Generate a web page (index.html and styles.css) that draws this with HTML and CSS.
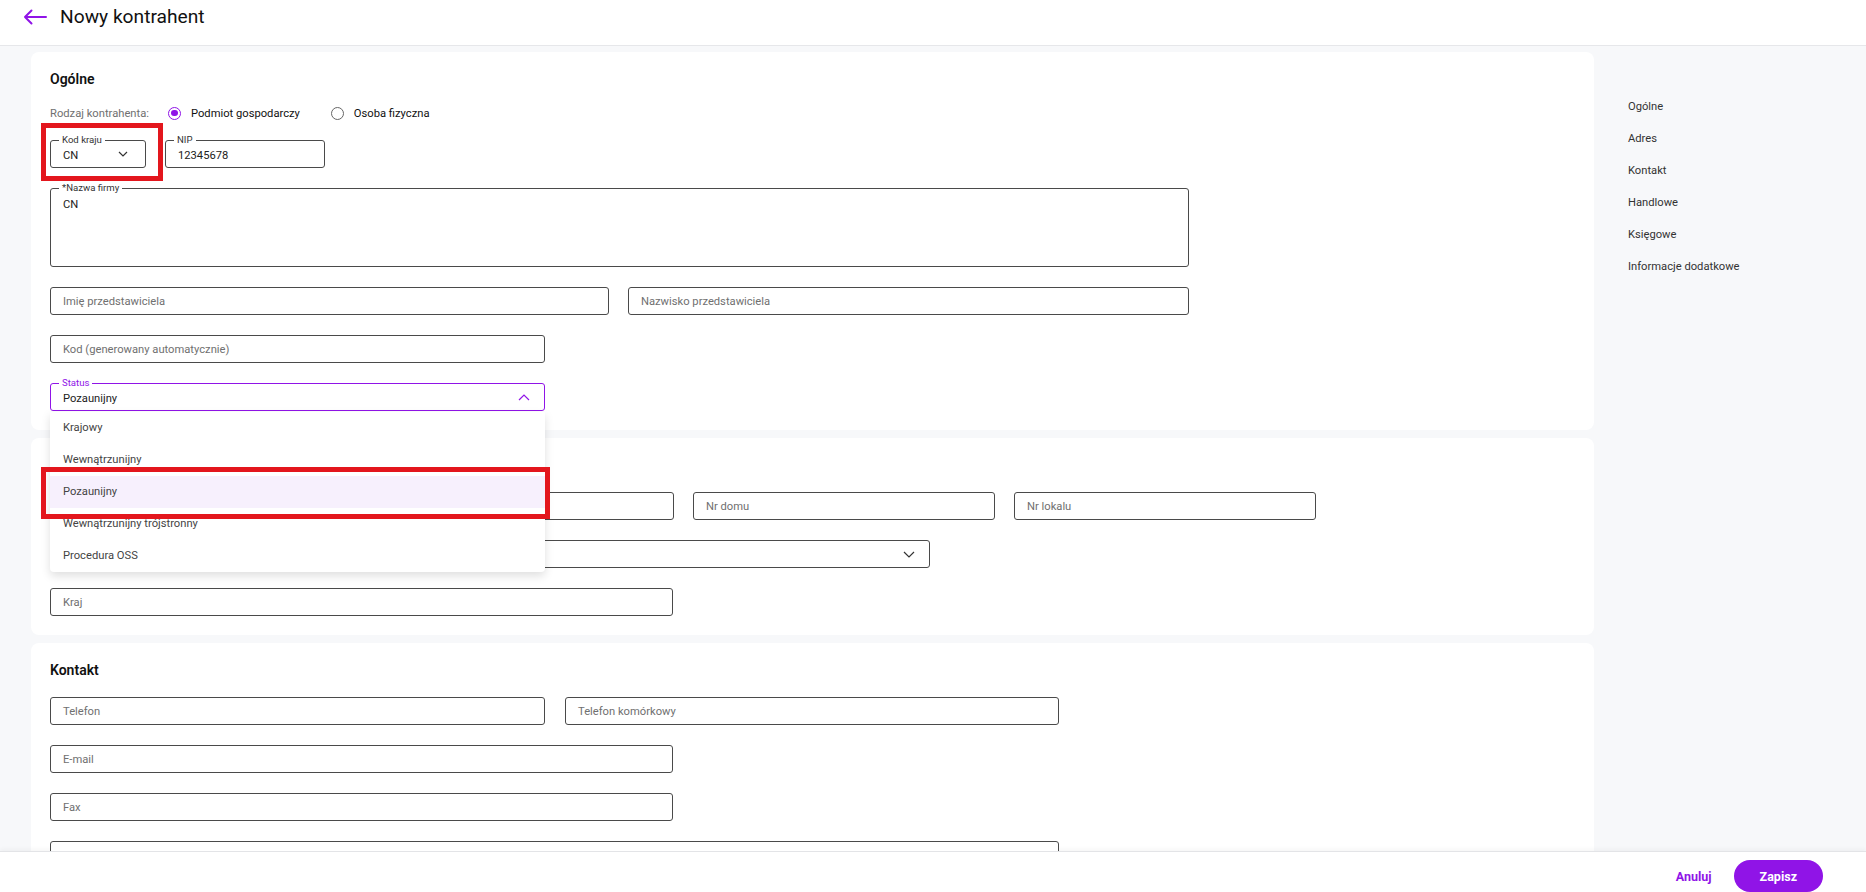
FILE: index.html
```html
<!DOCTYPE html>
<html lang="pl">
<head>
    <meta charset="utf-8">
    <title>Nowy kontrahent</title>
    <link rel="stylesheet" href="styles.css">
</head>
<body>
    <header class="topbar">
        <svg class="back-arrow" width="24" height="16" viewBox="0 0 24 16">
            <path d="M23 8H2M8.5 1.5L2 8l6.5 6.5" fill="none" stroke="currentColor" stroke-width="2" stroke-linecap="round" stroke-linejoin="round"/>
        </svg>
        <h1>Nowy kontrahent</h1>
    </header>

    <div class="page">
        <main class="cards">
            <section class="card">
                <h2>Ogólne</h2>

                <div class="radio-row">
                    <span class="radio-caption">Rodzaj kontrahenta:</span>
                    <label class="radio checked"><span class="radio-dot"></span>Podmiot gospodarczy</label>
                    <label class="radio"><span class="radio-dot"></span>Osoba fizyczna</label>
                </div>

                <div class="row row-country">
                    <div class="field field-country">
                        <span class="field-label">Kod kraju</span>
                        <span class="field-value">CN</span>
                        <svg class="chevron" width="10" height="6" viewBox="0 0 10 6"><path d="M1 1l4 4 4-4" fill="none" stroke="currentColor" stroke-width="1.2"/></svg>
                        <span class="mark mark-country"></span>
                    </div>
                    <div class="field field-nip">
                        <span class="field-label">NIP</span>
                        <span class="field-value">12345678</span>
                    </div>
                </div>

                <div class="field field-area">
                    <span class="field-label">*Nazwa firmy</span>
                    <span class="field-value">CN</span>
                </div>

                <div class="row row-name">
                    <div class="field"><span class="placeholder">Imię przedstawiciela</span></div>
                    <div class="field"><span class="placeholder">Nazwisko przedstawiciela</span></div>
                </div>

                <div class="field w-short"><span class="placeholder">Kod (generowany automatycznie)</span></div>

                <div class="field field-status w-short">
                    <span class="field-label">Status</span>
                    <span class="field-value">Pozaunijny</span>
                    <svg class="chevron" width="12" height="7" viewBox="0 0 12 7"><path d="M1 6l5-5 5 5" fill="none" stroke="currentColor" stroke-width="1.2"/></svg>

                    <ul class="menu">
                        <li>Krajowy</li>
                        <li>Wewnątrzunijny</li>
                        <li class="selected">Pozaunijny<span class="mark mark-option"></span></li>
                        <li>Wewnątrzunijny trójstronny</li>
                        <li>Procedura OSS</li>
                    </ul>
                </div>
            </section>

            <section class="card">
                <h2>Adres</h2>

                <div class="row row-address">
                    <div class="field"><span class="placeholder">Ulica</span></div>
                    <div class="field"><span class="placeholder">Nr domu</span></div>
                    <div class="field"><span class="placeholder">Nr lokalu</span></div>
                </div>

                <div class="field w-select">
                    <span class="placeholder">Miejscowość</span>
                    <svg class="chevron" width="12" height="7" viewBox="0 0 12 7"><path d="M1 1l5 5 5-5" fill="none" stroke="currentColor" stroke-width="1.2"/></svg>
                </div>

                <div class="field w-mid"><span class="placeholder">Kraj</span></div>
            </section>

            <section class="card">
                <h2>Kontakt</h2>

                <div class="row row-phone">
                    <div class="field"><span class="placeholder">Telefon</span></div>
                    <div class="field"><span class="placeholder">Telefon komórkowy</span></div>
                </div>

                <div class="field w-mid"><span class="placeholder">E-mail</span></div>
                <div class="field w-mid"><span class="placeholder">Fax</span></div>
                <div class="field w-long"></div>
            </section>
        </main>

        <nav class="side-nav">
            <a>Ogólne</a>
            <a>Adres</a>
            <a>Kontakt</a>
            <a>Handlowe</a>
            <a>Księgowe</a>
            <a>Informacje dodatkowe</a>
        </nav>
    </div>

    <footer class="actions">
        <button class="btn-link">Anuluj</button>
        <button class="btn-primary">Zapisz</button>
    </footer>
</body>
</html>
```

FILE: styles.css
```css
:root {
    --page-bg: #f7f8fa;
    --purple: #9014e7;
    --line: #4a4a4a;
    --text: #222;
    --muted: #707070;
    --mark: #e3161d;
}

* {
    box-sizing: border-box;
    margin: 0;
    padding: 0;
}

html, body {
    height: 100%;
}

body {
    display: flex;
    flex-direction: column;
    height: 100vh;
    overflow: hidden;

    background-color: var(--page-bg);
    color: var(--text);
    font-family: Roboto, "Noto Sans", sans-serif;
    font-size: 11.2px;
}

/* top bar */

.topbar {
    display: flex;
    align-items: center;
    flex: none;
    height: 46px;
    padding: 0 0 12px 23px;

    background-color: #fff;
    border-bottom: 1px solid #e6e7ea;
}

.back-arrow {
    color: var(--purple);
}

.topbar h1 {
    margin-left: 13px;
    font-size: 19.2px;
    font-weight: 400;
    color: #111;
}

/* page */

.page {
    display: flex;
    flex: 1;
    min-height: 0;
    overflow: hidden;
}

.cards {
    display: flex;
    flex-direction: column;
    gap: 8px;
    width: 1594px;
    flex: none;
    padding: 6px 0 0 31px;
}

.card {
    display: flex;
    flex-direction: column;
    align-items: flex-start;
    gap: 20px;

    padding: 16px 19px 19px;
    background-color: #fff;
    border-radius: 8px;
}

.card h2 {
    font-size: 14px;
    font-weight: 600;
    line-height: 20px;
    color: #111;
    margin-top: 1px;
    margin-bottom: -3px;
}

/* radio */

.radio-row {
    display: flex;
    align-items: center;
    height: 20px;
    margin-top: -3px;
    margin-bottom: -3px;
}

.radio-caption {
    color: var(--muted);
    margin-right: 19px;
}

.radio {
    display: flex;
    align-items: center;
    gap: 10px;
    margin-right: 31px;
    color: #111;
}

.radio-dot {
    position: relative;
    width: 13px;
    height: 13px;
    border: 1.3px solid #666;
    border-radius: 50%;
}

.radio.checked .radio-dot {
    border-color: var(--purple);
}

.radio.checked .radio-dot::after {
    content: "";
    position: absolute;
    inset: 2.2px;
    border-radius: 50%;
    background-color: var(--purple);
}

/* fields */

.row {
    display: grid;
    column-gap: 19px;
}

.row-country {
    grid-template-columns: 96px 160px;
}

.row-name {
    grid-template-columns: 559px 561px;
}

.row-address {
    grid-template-columns: 624px 302px 302px;
}

.row-phone {
    grid-template-columns: 495px 494px;
    column-gap: 20px;
}

.field {
    position: relative;
    display: flex;
    align-items: center;
    justify-content: space-between;
    height: 28px;
    padding: 0 12px;

    border: 1px solid var(--line);
    border-radius: 3px;
    background-color: #fff;
}

.field-label {
    position: absolute;
    top: -6px;
    left: 8px;
    padding: 0 3px;

    background-color: #fff;
    font-size: 9.6px;
    line-height: 10px;
    color: #333;
}

.field-value {
    padding-top: 3px;
    line-height: 14px;
    color: var(--text);
}

.placeholder {
    color: var(--muted);
}

.chevron {
    flex: none;
    color: #333;
}

.field-country {
    padding-right: 17px;
}

.field-area {
    align-items: flex-start;
    width: 1139px;
    height: 79px;
}

.field-area .field-value {
    padding-top: 9px;
}

.w-short {
    width: 495px;
}

.w-mid {
    width: 623px;
}

.w-select {
    width: 880px;
    padding-right: 14px;
}

.w-long {
    width: 1009px;
}

.field-status {
    border-color: var(--purple);
    padding-right: 14px;
    z-index: 2;
}

.field-status .field-label,
.field-status .chevron {
    color: var(--purple);
}

/* open status dropdown */

.menu {
    position: absolute;
    top: 28px;
    left: -1px;
    right: -1px;
    list-style: none;

    background-color: #fff;
    border-radius: 0 0 4px 4px;
    box-shadow: 0 4px 10px rgba(0, 0, 0, 0.13);
}

.menu li {
    position: relative;
    height: 32px;
    padding-left: 13px;
    line-height: 32px;
    color: #444;
}

.menu li.selected {
    background-color: #f7f0fd;
}

/* red annotation frames */

.mark {
    position: absolute;
    border: 5px solid var(--mark);
    pointer-events: none;
}

.mark-country {
    top: -18px;
    left: -10px;
    right: -18px;
    bottom: -14px;
}

.mark-option {
    top: -9px;
    left: -9px;
    right: -5px;
    bottom: -11px;
}

/* side navigation */

.side-nav {
    display: flex;
    flex-direction: column;
    padding: 45px 0 0 34px;
}

.side-nav a {
    line-height: 32px;
    color: #333;
}

/* footer */

.actions {
    display: flex;
    align-items: flex-start;
    justify-content: flex-end;
    gap: 22px;
    flex: none;
    height: 41px;
    padding: 8px 43px 0 0;

    background-color: #fff;
    border-top: 1px solid #e3e4e7;
    box-shadow: 0 -2px 4px rgba(0, 0, 0, 0.04);
}

.actions button {
    font-family: inherit;
    font-size: 12.5px;
    font-weight: 700;
    border: none;
    cursor: pointer;
}

.btn-link {
    height: 32px;
    background: none;
    color: var(--purple);
}

.btn-primary {
    height: 32px;
    padding: 0 26px;
    border-radius: 16px;
    background-color: var(--purple);
    color: #fff;
}
```
